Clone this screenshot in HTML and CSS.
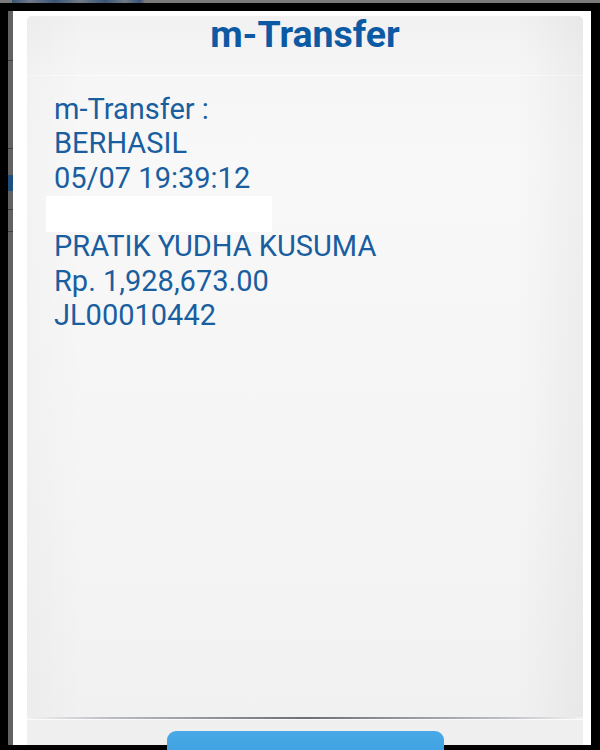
FILE: index.html
```html
<!DOCTYPE html>
<html lang="id">
<head>
<meta charset="utf-8">
<title>m-Transfer</title>
<link rel="stylesheet" href="styles.css">
</head>
<body>
<div class="page">
  <div class="peek-top"></div>
  <div class="main">
    <div class="peek-left">
      <span class="peek-line l1"></span>
      <span class="peek-line l2"></span>
      <span class="peek-glyph"></span>
      <span class="peek-line l3"></span>
      <span class="peek-line l4"></span>
    </div>
    <div class="screen">
      <div class="dialog">
        <div class="title">m-Transfer</div>
        <div class="divider"></div>
        <div class="content">
          <div class="line">m-Transfer :</div>
          <div class="line">BERHASIL</div>
          <div class="line">05/07 19:39:12</div>
          <div class="redact"></div>
          <div class="line">PRATIK YUDHA KUSUMA</div>
          <div class="line">Rp. 1,928,673.00</div>
          <div class="line">JL00010442</div>
        </div>
        <div class="sep"></div>
        <div class="footer">
          <div class="button"></div>
        </div>
      </div>
    </div>
  </div>
</div>
</body>
</html>
```
FILE: styles.css
```css
html, body {
  margin: 0;
  padding: 0;
  background: #000;
}
.page {
  width: 600px;
  height: 750px;
  display: flex;
  flex-direction: column;
  background: #000;
  overflow: hidden;
  font-family: Roboto, "Noto Sans", sans-serif;
}
.peek-top {
  height: 3px;
  flex: none;
  background:
    linear-gradient(to right, #7a7a7a 0, #7a7a7a 12px, #3a5577 12px, #6f7a88 30px, #3a5577 55px, #717b86 80px, #3a5577 105px, #707a86 125px, #3a5577 140px, #7a7a7a 145px, #7a7a7a 100%);
}
.main {
  flex: 1;
  display: flex;
  margin-top: 8px;
  padding: 0 9px 5px 8px;
  min-height: 0;
}
.peek-left {
  width: 5px;
  background: #626262;
  display: flex;
  flex-direction: column;
  flex: none;
}
.peek-line {
  display: block;
  height: 1px;
  background: #3e3e3e;
}
.l1 { margin-top: 49px; }
.l2 { margin-top: 87px; }
.peek-glyph {
  display: block;
  margin-top: 26px;
  height: 16px;
  width: 5px;
  background: #1f4f80;
}
.l3 { margin-top: 18px; }
.l4 { margin-top: 21px; }
.screen {
  flex: 1;
  background: #fff;
  padding: 5px 8px 0 14px;
  display: flex;
}
.dialog {
  flex: 1;
  display: flex;
  flex-direction: column;
  border-radius: 5px 5px 0 0;
  background:
    linear-gradient(to right, rgba(0,0,0,0.02), rgba(0,0,0,0) 10%, rgba(0,0,0,0) 88%, rgba(0,0,0,0.04)),
    linear-gradient(to bottom, #f1f1f1 0px, #f6f6f6 60px, #f8f8f8 150px, #f5f5f5 450px, #f1f1f1 700px);
}
.title {
  height: 59px;
  flex: none;
  text-align: center;
  font-size: 37.5px;
  line-height: 36px;
  font-weight: 700;
  color: #0d5aa4;
  box-sizing: border-box;
}
.divider {
  height: 1px;
  flex: none;
  background: linear-gradient(to right, rgba(255,255,255,0.3), #fdfdfd 20%, #fdfdfd 70%, rgba(255,255,255,0.3));
}
.content {
  flex: 1;
  padding: 16px 0 0 27px;
  color: #195e9f;
  font-size: 29px;
  line-height: 34.3px;
}
.line {
  white-space: nowrap;
}
.redact {
  width: 226px;
  height: 36px;
  margin: 1px 0 -2.7px -8px;
  background: #fff;
}
.sep {
  height: 2px;
  flex: none;
  background: linear-gradient(to right, #f2f2f2, #b9bcc2 15%, #6c6f78 50%, #b9bcc2 85%, #f2f2f2);
  border-bottom: 1px solid #fbfbfb;
}
.footer {
  height: 25px;
  flex: none;
  display: flex;
  justify-content: center;
  padding-top: 11px;
  box-sizing: border-box;
  background: #efefef;
}
.button {
  width: 277px;
  height: 30px;
  border-radius: 9px 9px 0 0;
  background: linear-gradient(to bottom, #49a9e6, #3b9fe0);
}
```
